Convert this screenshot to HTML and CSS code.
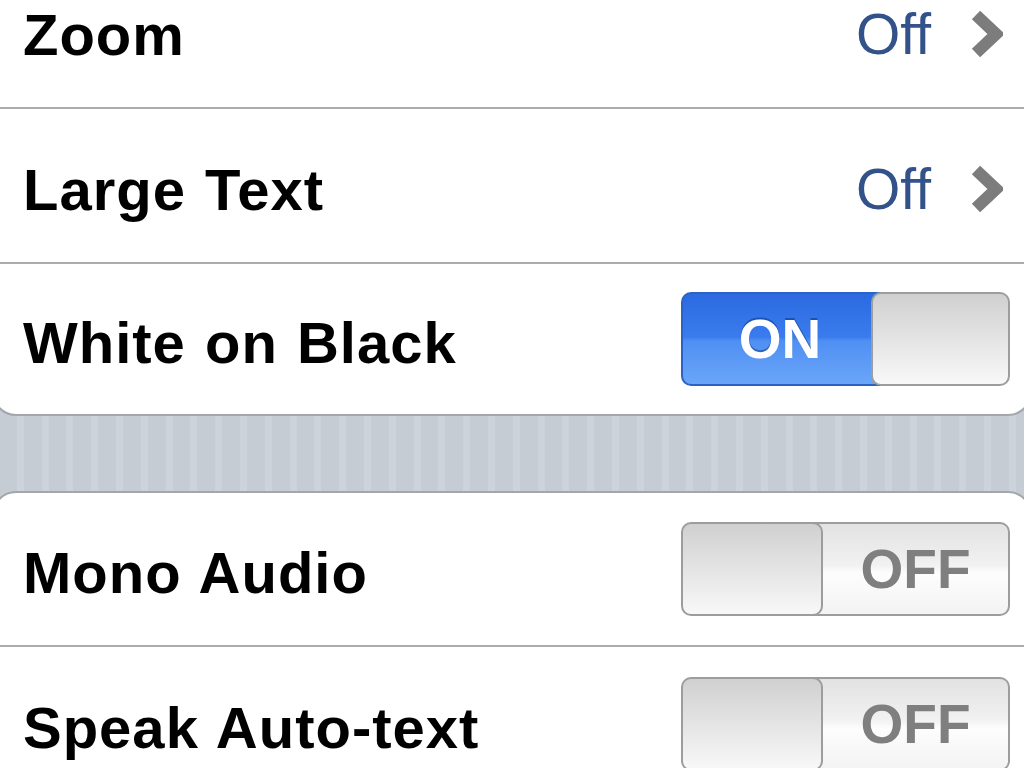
FILE: index.html
```html
<!DOCTYPE html>
<html>
<head>
<meta charset="utf-8">
<title>Accessibility</title>
<link rel="stylesheet" href="styles.css">
</head>
<body>
<div class="page">
  <div class="group group-top">
    <div class="row">
      <span class="label">Zoom</span>
      <span class="value"><span class="value-text">Off</span><svg class="chevron" width="32" height="48" viewBox="0 0 32 48"><polyline points="5,5 25,24 5,43" fill="none" stroke="#7c7c7c" stroke-width="12" stroke-linejoin="miter"/></svg></span>
    </div>
    <div class="row">
      <span class="label">Large Text</span>
      <span class="value"><span class="value-text">Off</span><svg class="chevron" width="32" height="48" viewBox="0 0 32 48"><polyline points="5,5 25,24 5,43" fill="none" stroke="#7c7c7c" stroke-width="12" stroke-linejoin="miter"/></svg></span>
    </div>
    <div class="row last">
      <span class="label">White on Black</span>
      <div class="switch switch-on">
        <div class="on-part"><span class="on-text">ON</span></div>
        <div class="thumb"></div>
      </div>
    </div>
  </div>
  <div class="group group-bottom">
    <div class="row">
      <span class="label">Mono Audio</span>
      <div class="switch switch-off">
        <div class="thumb"></div>
        <div class="off-part"><span class="off-text">OFF</span></div>
      </div>
    </div>
    <div class="row last">
      <span class="label">Speak Auto-text</span>
      <div class="switch switch-off">
        <div class="thumb"></div>
        <div class="off-part"><span class="off-text">OFF</span></div>
      </div>
    </div>
  </div>
</div>
</body>
</html>
```

FILE: styles.css
```css
html, body {
  margin: 0;
  padding: 0;
  height: 100%;
  overflow: hidden;
}

body {
  background-color: #c5ccd4;
  background-image: repeating-linear-gradient(90deg,
    #c5ccd4 0px, #c5ccd4 17.8px,
    #ccd3da 17.8px, #ccd3da 24.8px);
  background-position: -1px 0;
  font-family: "Liberation Sans", Arial, Helvetica, sans-serif;
}

.page {
  margin-top: -48px;
}

.group {
  margin: 0 -8px;
  background: #ffffff;
  border: 2px solid #a3a6aa;
  border-radius: 24px;
}

.group + .group {
  margin-top: 75px;
}

.row {
  height: 153px;
  display: flex;
  align-items: center;
  justify-content: space-between;
  padding: 0 20px 0 29px;
  border-bottom: 2px solid #acacac;
}

.row.last {
  border-bottom: none;
}

.group-top .row.last {
  height: 150px;
}

.group-bottom .row:first-child {
  height: 152px;
}

.label {
  font-size: 58px;
  font-weight: bold;
  color: #000000;
  letter-spacing: 1px;
  word-spacing: 2px;
  margin-top: 7px;
}

.value {
  display: flex;
  align-items: center;
  gap: 40px;
  margin-right: 7px;
  margin-top: 6px;
}

.value-text {
  font-size: 57px;
  font-weight: normal;
  color: #34528a;
}

.chevron {
  display: block;
}

.switch {
  width: 329px;
  height: 94px;
  display: flex;
}

.on-part {
  flex: 1;
  display: flex;
  align-items: center;
  justify-content: center;
  padding-right: 10px;
  border: 2px solid #2b62c4;
  border-right: none;
  border-radius: 10px 0 0 10px;
  background: linear-gradient(180deg, #2b6ae0 0%, #3a7cee 48%, #4f8ff3 52%, #6aa6f8 100%);
}

.on-text {
  font-size: 55px;
  font-weight: bold;
  color: #ffffff;
  text-shadow: 0 -2px 0 rgba(0, 40, 120, 0.45);
  margin-left: 6px;
}

.thumb {
  box-sizing: border-box;
  border: 2px solid #9d9d9d;
  border-radius: 10px;
  background: linear-gradient(180deg, #d0d0d0 0%, #e4e4e4 50%, #f8f8f8 100%);
}

.switch-on .thumb {
  flex: 0 0 139px;
  margin-left: -10px;
}

.switch-off .thumb {
  flex: 0 0 142px;
  position: relative;
  z-index: 1;
}

.off-part {
  flex: 1;
  display: flex;
  align-items: center;
  justify-content: center;
  margin-left: -10px;
  padding-left: 10px;
  border: 2px solid #9d9d9d;
  border-left: none;
  border-radius: 0 10px 10px 0;
  background: linear-gradient(180deg, #e2e2e2 0%, #f1f1f1 45%, #fdfdfd 55%, #f3f3f3 100%);
}

.off-text {
  font-size: 55px;
  font-weight: bold;
  color: #7f7f7f;
}
```
